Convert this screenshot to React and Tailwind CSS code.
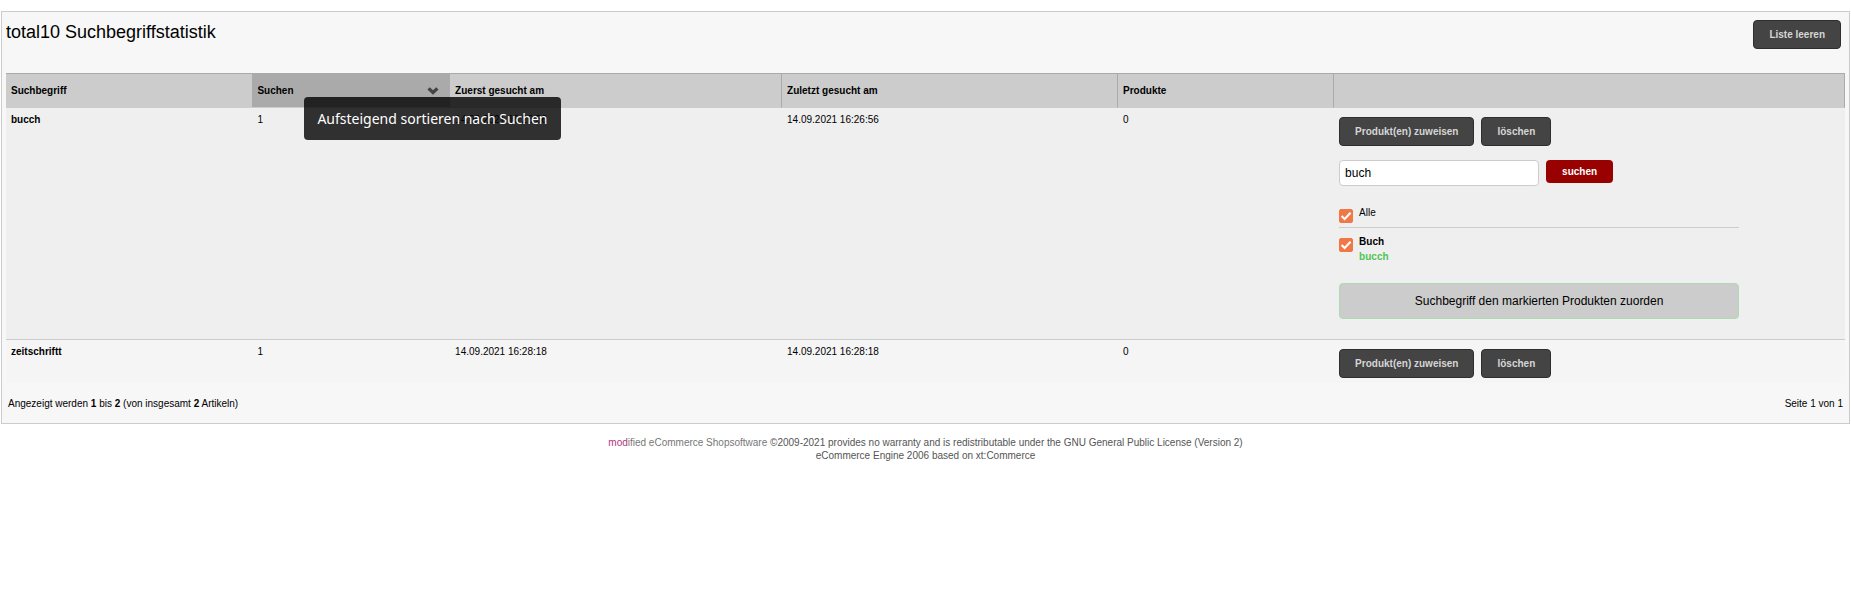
import { useState } from "react";

const darkButton =
  "cursor-pointer rounded border border-[#2e2e2e] bg-[#444] px-[15px] py-[6px] text-[10px] font-bold leading-[15px] text-[#d6d6d6]";
const headCell =
  "h-[35px] border-r border-b border-t border-t-[#aaa] border-b-[#ccc] border-r-[#aaa] pl-[5px] text-left font-bold";
const bodyCell = "pl-[5px] pt-[4px] align-top";

function Check({ id, checked, onChange }) {
  return (
    <span className="mt-[3px] grid size-[14px] shrink-0">
      <input
        id={id}
        type="checkbox"
        checked={checked}
        onChange={onChange}
        className="col-start-1 row-start-1 size-[14px] appearance-none rounded-[2px] border border-[#f07746] bg-white checked:bg-[#f07746]"
      />
      {checked && (
        <svg viewBox="0 0 14 14" className="pointer-events-none col-start-1 row-start-1 size-[14px]" aria-hidden="true">
          <path d="M2.6 7 L5.6 10 L11.6 3.8" fill="none" stroke="#fff" strokeWidth="2.1" />
        </svg>
      )}
    </span>
  );
}

function RowActions() {
  return (
    <div className="flex gap-[7px]">
      <button type="button" className={darkButton}>Produkt(en) zuweisen</button>
      <button type="button" className={darkButton}>löschen</button>
    </div>
  );
}

function AssignForm() {
  const [term, setTerm] = useState("buch");
  const [picked, setPicked] = useState(true);
  const toggle = () => setPicked(!picked);
  return (
    <form onSubmit={(e) => e.preventDefault()} className="max-w-[400px] pt-[14px] pb-[20px]">
      <div className="flex items-start gap-[7px]">
        <input
          type="text"
          aria-label="Produktsuche"
          value={term}
          onChange={(e) => setTerm(e.target.value)}
          className="h-[26px] w-1/2 rounded border border-[#ccc] bg-white px-[5px] text-[12px]"
        />
        <button type="submit" className="cursor-pointer rounded bg-[#990000] px-[16px] py-[4px] text-[10px] font-bold leading-[15px] text-white">
          suchen
        </button>
      </div>
      <div className="mt-[20px] flex gap-[6px] border-b border-[#ccc] pb-[4px] leading-[14px]">
        <Check id="all" checked={picked} onChange={toggle} />
        <label htmlFor="all">Alle</label>
      </div>
      <div className="mt-[7px] flex gap-[6px] leading-[14px]">
        <Check id="buch" checked={picked} onChange={toggle} />
        <label htmlFor="buch" className="font-bold">
          Buch
          <span className="block leading-[15px] text-[#4fc456]">bucch</span>
        </label>
      </div>
      <button type="submit" className="mt-[19px] h-[36px] w-full cursor-pointer rounded border border-[#addbb0] bg-[#ccc] text-[12px]">
        Suchbegriff den markierten Produkten zuorden
      </button>
    </form>
  );
}

export default function App() {
  return (
    <div className="min-h-screen bg-white px-px pt-[11px] font-['Liberation_Sans',Arial,sans-serif] text-[10px] leading-[15px] text-black">
      <main className="border border-[#ccc] bg-[#f7f7f7] px-[4px] pb-[12px]">
        <header className="flex items-start justify-between pt-[8px] pr-[4px] pb-[24px]">
          <h1 className="text-[18px] leading-[24px]">total10 Suchbegriffstatistik</h1>
          <button type="button" className={darkButton}>Liste leeren</button>
        </header>

        <table className="w-full table-fixed border-separate border-spacing-0">
          <colgroup>
            <col className="w-[13.4%]" />
            <col className="w-[10.75%]" />
            <col className="w-[18.05%]" />
            <col className="w-[18.27%]" />
            <col className="w-[11.75%]" />
            <col />
          </colgroup>
          <thead>
            <tr className="bg-[#ccc]">
              <th className="h-[35px] border-y border-t-[#aaa] border-b-[#ccc] pl-[5px] text-left font-bold">Suchbegriff</th>
              <th className={`${headCell} relative bg-[#aaa]`}>
                <div className="flex items-center justify-between pr-[9px]">
                  Suchen
                  <svg viewBox="0 0 14 10" className="h-[10px] w-[14px]" aria-hidden="true">
                    <path d="M3.8 1.2 L7 4.2 L10.2 1.2 L12.6 3.6 L7 8.8 L1.4 3.6 Z" fill="#444" />
                  </svg>
                </div>
                <div
                  role="tooltip"
                  className="absolute left-[52px] top-[23px] z-10 rounded bg-black/80 px-[13px] py-[11px] font-['Noto_Sans',sans-serif] text-[14px] font-normal leading-[21px] whitespace-nowrap text-white"
                >
                  Aufsteigend sortieren nach Suchen
                </div>
              </th>
              <th className={headCell}>Zuerst gesucht am</th>
              <th className={headCell}>Zuletzt gesucht am</th>
              <th className={headCell}>Produkte</th>
              <th className={headCell} aria-label="Aktionen"></th>
            </tr>
          </thead>
          <tbody>
            <tr className="bg-[#efefef] [&>td]:border-b [&>td]:border-[#ccc]">
              <td className={`${bodyCell} font-bold`}>bucch</td>
              <td className={bodyCell}>1</td>
              <td className={bodyCell}>14.09.2021 16:26:56</td>
              <td className={bodyCell}>14.09.2021 16:26:56</td>
              <td className={bodyCell}>0</td>
              <td className="pt-[9px] pl-[5px] align-top">
                <RowActions />
                <AssignForm />
              </td>
            </tr>
            <tr className="bg-[#f5f5f5]">
              <td className={`${bodyCell} font-bold`}>zeitschriftt</td>
              <td className={bodyCell}>1</td>
              <td className={bodyCell}>14.09.2021 16:28:18</td>
              <td className={bodyCell}>14.09.2021 16:28:18</td>
              <td className={bodyCell}>0</td>
              <td className="pt-[9px] pb-[5px] pl-[5px] align-top">
                <RowActions />
              </td>
            </tr>
          </tbody>
        </table>

        <div className="flex justify-between px-[2px] pt-[13px]">
          <p>Angezeigt werden <b>1</b> bis <b>2</b> (von insgesamt <b>2</b> Artikeln)</p>
          <p>Seite 1 von 1</p>
        </div>
      </main>

      <footer className="pt-[12px] text-center leading-[13px] text-[#555]">
        <p>
          <a href="#" className="text-[#777]"><span className="text-[#b0347e]">mod</span>ified eCommerce Shopsoftware</a>{" "}
          ©2009-2021 provides no warranty and is redistributable under the GNU General Public License (Version 2)
        </p>
        <p>eCommerce Engine 2006 based on xt:Commerce</p>
      </footer>
    </div>
  );
}
